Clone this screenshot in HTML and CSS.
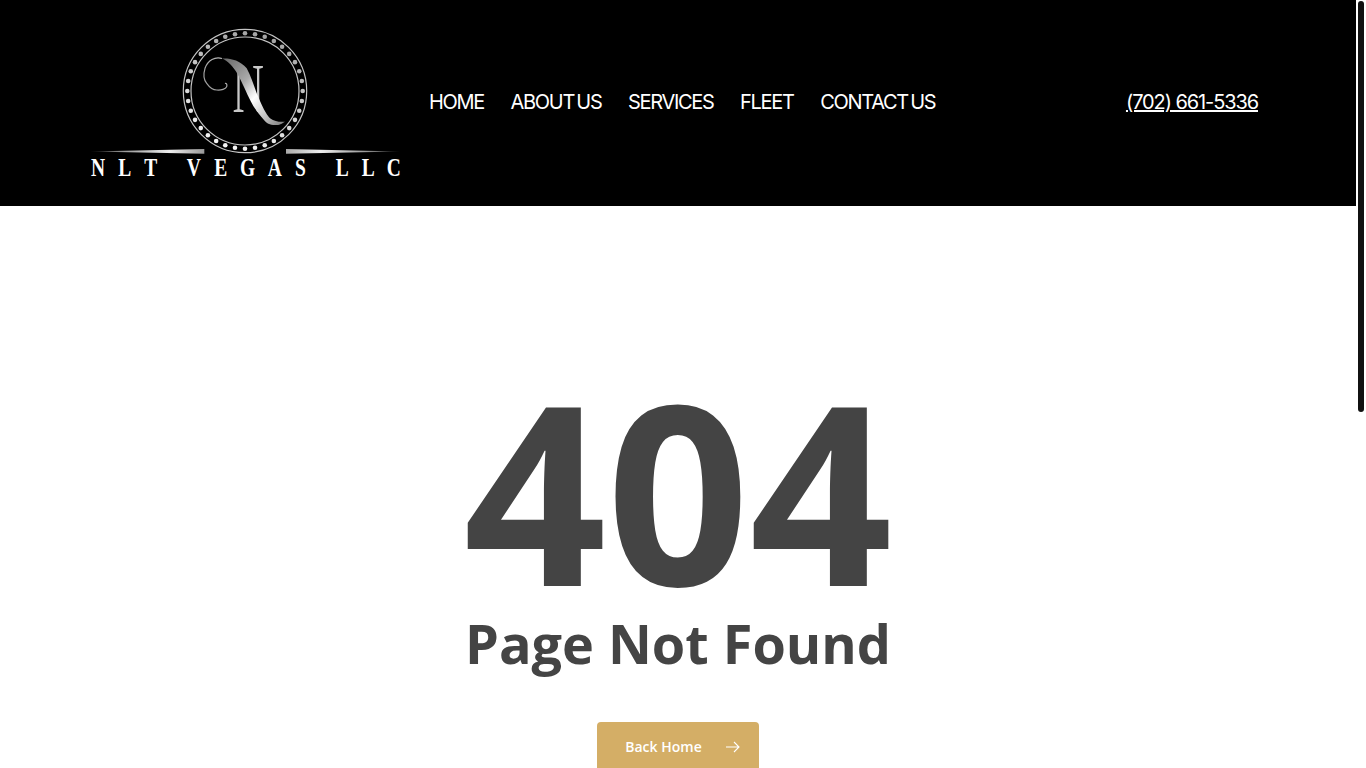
FILE: index.html
```html
<!DOCTYPE html>
<html lang="en">
<head>
    <meta charset="utf-8">
    <title>Page Not Found - NLT Vegas LLC</title>
    <meta content="width=device-width, initial-scale=1.0" name="viewport">
    <link rel="stylesheet" href="styles.css">
</head>
<body>
<div class="page">
    <header class="site-header">
        <a class="logo" href="#">
            <svg width="310" height="150" viewBox="90 28 310 150" role="img" aria-label="NLT Vegas LLC">
                <defs>
                    <linearGradient id="silver" x1="0" y1="0" x2="1" y2="1">
                        <stop offset="0" stop-color="#666"/>
                        <stop offset="0.35" stop-color="#aaa"/>
                        <stop offset="0.55" stop-color="#fff"/>
                        <stop offset="0.8" stop-color="#bbb"/>
                        <stop offset="1" stop-color="#777"/>
                    </linearGradient>
                    <linearGradient id="swash" x1="1" y1="0" x2="0" y2="1">
                        <stop offset="0" stop-color="#bbb"/>
                        <stop offset="1" stop-color="#999"/>
                    </linearGradient>
                    <linearGradient id="line-left" x1="0" y1="0" x2="1" y2="0">
                        <stop offset="0" stop-color="#222"/>
                        <stop offset="0.3" stop-color="#999"/>
                        <stop offset="0.7" stop-color="#eee"/>
                        <stop offset="1" stop-color="#999"/>
                    </linearGradient>
                    <linearGradient id="line-right" x1="1" y1="0" x2="0" y2="0">
                        <stop offset="0" stop-color="#222"/>
                        <stop offset="0.3" stop-color="#999"/>
                        <stop offset="0.7" stop-color="#eee"/>
                        <stop offset="1" stop-color="#aaa"/>
                    </linearGradient>
                </defs>
                <circle cx="245" cy="91" r="61.7" fill="none" stroke="#c4c4c4" stroke-width="1.2"/>
                <circle cx="245" cy="91" r="54" fill="none" stroke="#c4c4c4" stroke-width="1.2"/>
                <g id="dots"></g>
                <text class="logo-n" transform="translate(232.5 112.3) scale(.63 1)" fill="#c8c8c8">N</text>
                <path d="M222 58.5C215 56.5 208 60 205 68.3C203 75 204 80 206.7 83.3C210 88 213 90 216.7 90C221 90.5 226 89 226.7 86.7C227.5 84 226 83 225 83.5" fill="none" stroke="url(#swash)" stroke-width="1.2"/>
                <path d="M222 58.5C230 58 240 60 246.7 68.3C252 78 255 90 258.3 96.7C262 106 266 114 270 118.3C275 122 280 122 285 121.7C280 125 278 125 275 125C270 125 266 123 264 120C258 113 254 108 251 101.7C246 92 242 82 238 75C234 67 228 61 222 58.5Z" fill="url(#silver)"/>
                <path d="M90 151.5L204.3 149V153.7Z" fill="url(#line-left)"/>
                <path d="M400 151.5L286 149V153.7Z" fill="url(#line-right)"/>
                <text class="logo-word" transform="scale(.78 1)" y="176" x="116.7 151.7 185 200 239.4 274.7 307.7 343.2 378.2 400 430.4 463.7 495.8">NLT VEGAS LLC</text>
            </svg>
        </a>
        <nav class="main-nav">
            <a href="#">HOME</a>
            <a href="#">ABOUT US</a>
            <a href="#">SERVICES</a>
            <a href="#">FLEET</a>
            <a href="#">CONTACT US</a>
        </nav>
        <a class="phone" href="#">(702) 661-5336</a>
    </header>

    <main class="not-found">
        <h1>404</h1>
        <h2>Page Not Found</h2>
        <a class="btn-home" href="#">
            <span>Back Home</span>
            <svg class="btn-arrow" width="14" height="12" viewBox="0 0 14 12" fill="none" stroke="#fff" stroke-width="1.1">
                <path d="M0 6H13M8 1L13 6L8 11"/>
            </svg>
        </a>
    </main>
</div>

<div class="scrollbar"><div class="scrollbar-thumb"></div></div>

<script>
    // ring of dots round the logo, darker on the upper left
    const dots = document.getElementById("dots");
    for (let i = 0; i < 36; i++) {
        const a = i * 10 * Math.PI / 180;
        const c = document.createElementNS("http://www.w3.org/2000/svg", "circle");
        const shade = Math.round(205 + 40 * Math.cos(a - Math.PI * 0.6));
        c.setAttribute("cx", 245 + 57.7 * Math.cos(a));
        c.setAttribute("cy", 91 + 57.7 * Math.sin(a));
        c.setAttribute("r", 2.3);
        c.setAttribute("fill", "rgb(" + shade + "," + shade + "," + shade + ")");
        dots.appendChild(c);
    }
</script>
</body>
</html>
```

FILE: styles.css
```css
html, body {
    height: 100%;
}

body {
    margin: 0;
    display: flex;
    overflow: hidden;
    background: #fff;
    font-family: "Open Sans", sans-serif;
}

.page {
    flex: 1;
    min-width: 0;
}

.site-header {
    height: 206px;
    background: #000;
    display: flex;
    align-items: center;
    padding: 0 98px 0 90px;
}

.logo {
    display: block;
    height: 150px;
}

.logo svg {
    overflow: visible;
}

.logo-n {
    font-family: "Liberation Serif", serif;
    font-size: 69px;
}

.logo-word {
    font-family: "Liberation Serif", serif;
    font-weight: 700;
    font-size: 25px;
    fill: #fff;
}

.main-nav {
    display: flex;
    gap: 26.5px;
    margin-left: 29px;
    margin-bottom: 2px;
}

.main-nav a,
.phone {
    font-family: Inter, sans-serif;
    font-size: 20px;
    letter-spacing: -1.3px;
    word-spacing: -2px;
    color: #fff;
    text-decoration: none;
}

.phone {
    margin-left: auto;
    margin-bottom: 2px;
    letter-spacing: -1.1px;
    word-spacing: 0;
    text-decoration: underline;
}

.not-found {
    text-align: center;
    color: #444;
    padding-top: 159px;
}

.not-found h1 {
    margin: 0;
    font-size: 250px;
    line-height: 248px;
    font-weight: 700;
}

.not-found h2 {
    margin: 0;
    font-size: 54px;
    line-height: 60px;
    font-weight: 700;
}

.btn-home {
    display: inline-flex;
    align-items: center;
    gap: 24px;
    margin-top: 49px;
    height: 49px;
    padding: 0 19px 0 28px;
    background: #d4ae66;
    border-radius: 4px;
    color: #fff;
    font-size: 14px;
    font-weight: 600;
    text-decoration: none;
}

.btn-arrow {
    margin-top: 1px;
}

.scrollbar {
    width: 10px;
    background: #fff;
}

.scrollbar-thumb {
    width: 6px;
    height: 411px;
    margin: 1px 2px 0;
    background: #111;
    border-radius: 3px;
}
```
